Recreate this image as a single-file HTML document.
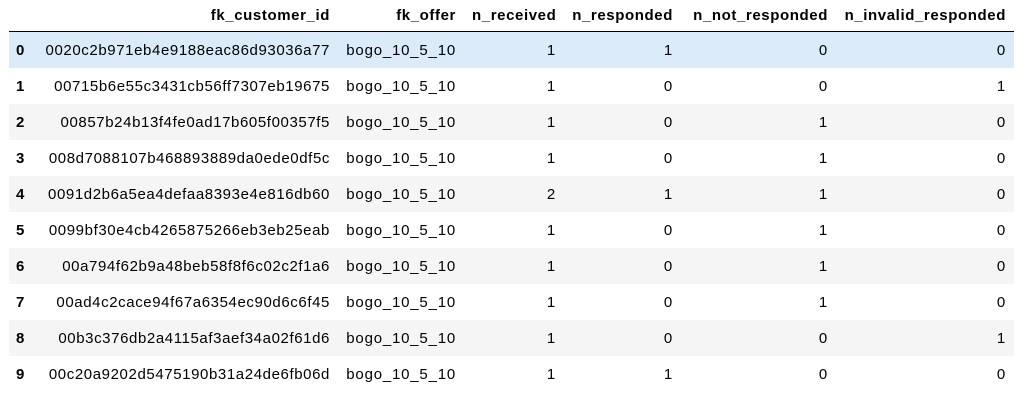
<!DOCTYPE html>
<html><head><style>
body{margin:0;background:#fff;font-family:"Liberation Sans",Arial,sans-serif;font-size:15px;color:#000;}
table{position:absolute;left:9px;top:0;border-collapse:collapse;table-layout:fixed;width:1005px;}
th,td{padding:0 8px;text-align:right;white-space:nowrap;overflow:visible;letter-spacing:0.8px;}
thead th{height:31px;font-weight:bold;border-bottom:1px solid #000;vertical-align:middle;letter-spacing:0.6px;}
tbody td,tbody th{height:36px;}
tbody td.id{letter-spacing:0.6px;}
tbody th{font-weight:bold;text-align:left;padding-left:7px;}
tbody tr:nth-child(odd){background:#f5f5f5;}
tbody tr.h{background:#dcebf9;}
</style></head><body>
<table>
<colgroup><col style="width:26px"><col style="width:303px"><col style="width:126px"><col style="width:100px"><col style="width:117px"><col style="width:155px"><col style="width:178px"></colgroup>
<thead><tr><th></th><th>fk_customer_id</th><th>fk_offer</th><th>n_received</th><th>n_responded</th><th>n_not_responded</th><th>n_invalid_responded</th></tr></thead>
<tbody>
<tr class="h"><th>0</th><td class="id">0020c2b971eb4e9188eac86d93036a77</td><td>bogo_10_5_10</td><td>1</td><td>1</td><td>0</td><td>0</td></tr>
<tr><th>1</th><td class="id">00715b6e55c3431cb56ff7307eb19675</td><td>bogo_10_5_10</td><td>1</td><td>0</td><td>0</td><td>1</td></tr>
<tr><th>2</th><td class="id">00857b24b13f4fe0ad17b605f00357f5</td><td>bogo_10_5_10</td><td>1</td><td>0</td><td>1</td><td>0</td></tr>
<tr><th>3</th><td class="id">008d7088107b468893889da0ede0df5c</td><td>bogo_10_5_10</td><td>1</td><td>0</td><td>1</td><td>0</td></tr>
<tr><th>4</th><td class="id">0091d2b6a5ea4defaa8393e4e816db60</td><td>bogo_10_5_10</td><td>2</td><td>1</td><td>1</td><td>0</td></tr>
<tr><th>5</th><td class="id">0099bf30e4cb4265875266eb3eb25eab</td><td>bogo_10_5_10</td><td>1</td><td>0</td><td>1</td><td>0</td></tr>
<tr><th>6</th><td class="id">00a794f62b9a48beb58f8f6c02c2f1a6</td><td>bogo_10_5_10</td><td>1</td><td>0</td><td>1</td><td>0</td></tr>
<tr><th>7</th><td class="id">00ad4c2cace94f67a6354ec90d6c6f45</td><td>bogo_10_5_10</td><td>1</td><td>0</td><td>1</td><td>0</td></tr>
<tr><th>8</th><td class="id">00b3c376db2a4115af3aef34a02f61d6</td><td>bogo_10_5_10</td><td>1</td><td>0</td><td>0</td><td>1</td></tr>
<tr><th>9</th><td class="id">00c20a9202d5475190b31a24de6fb06d</td><td>bogo_10_5_10</td><td>1</td><td>1</td><td>0</td><td>0</td></tr>
</tbody></table>
</body></html>
